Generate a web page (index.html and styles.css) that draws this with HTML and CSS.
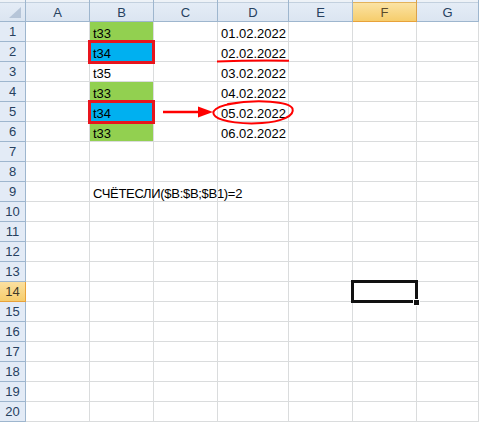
FILE: index.html
```html
<!DOCTYPE html>
<html>
<head>
<meta charset="utf-8">
<link rel="stylesheet" href="styles.css">
</head>
<body>
<div class="sheet">
  <div class="ch corner"><svg class="tri" width="14" height="12" viewBox="0 0 14 12"><polygon points="13,0 13,11 1,11" fill="#b6c5d8"/></svg></div>
  <div class="ch">A</div><div class="ch">B</div><div class="ch">C</div><div class="ch">D</div><div class="ch">E</div><div class="ch sel">F</div><div class="ch">G</div>

  <div class="rh">1</div><div class="c"></div><div class="c green">t33</div><div class="c"></div><div class="c date">01.02.2022</div><div class="c"></div><div class="c"></div><div class="c"></div>
  <div class="rh">2</div><div class="c"></div><div class="c blue boxed">t34<span class="redbox"></span></div><div class="c"></div><div class="c date">02.02.2022</div><div class="c"></div><div class="c"></div><div class="c"></div>
  <div class="rh">3</div><div class="c"></div><div class="c">t35</div><div class="c"></div><div class="c date">03.02.2022</div><div class="c"></div><div class="c"></div><div class="c"></div>
  <div class="rh">4</div><div class="c"></div><div class="c green">t33</div><div class="c"></div><div class="c date">04.02.2022</div><div class="c"></div><div class="c"></div><div class="c"></div>
  <div class="rh">5</div><div class="c"></div><div class="c blue boxed">t34<span class="redbox"></span></div><div class="c"></div><div class="c date">05.02.2022</div><div class="c"></div><div class="c"></div><div class="c"></div>
  <div class="rh">6</div><div class="c"></div><div class="c green">t33</div><div class="c"></div><div class="c date">06.02.2022</div><div class="c"></div><div class="c"></div><div class="c"></div>
  <div class="rh">7</div><div class="c"></div><div class="c"></div><div class="c"></div><div class="c"></div><div class="c"></div><div class="c"></div><div class="c"></div>
  <div class="rh">8</div><div class="c"></div><div class="c"></div><div class="c"></div><div class="c"></div><div class="c"></div><div class="c"></div><div class="c"></div>
  <div class="rh">9</div><div class="c"></div><div class="c formula">СЧЁТЕСЛИ($B:$B;$B1)=2</div><div class="c"></div><div class="c"></div><div class="c"></div><div class="c"></div><div class="c"></div>
  <div class="rh">10</div><div class="c"></div><div class="c"></div><div class="c"></div><div class="c"></div><div class="c"></div><div class="c"></div><div class="c"></div>
  <div class="rh">11</div><div class="c"></div><div class="c"></div><div class="c"></div><div class="c"></div><div class="c"></div><div class="c"></div><div class="c"></div>
  <div class="rh">12</div><div class="c"></div><div class="c"></div><div class="c"></div><div class="c"></div><div class="c"></div><div class="c"></div><div class="c"></div>
  <div class="rh">13</div><div class="c"></div><div class="c"></div><div class="c"></div><div class="c"></div><div class="c"></div><div class="c"></div><div class="c"></div>
  <div class="rh sel">14</div><div class="c"></div><div class="c"></div><div class="c"></div><div class="c"></div><div class="c"></div><div class="c active"><span class="activebox"></span><span class="handle"></span></div><div class="c"></div>
  <div class="rh">15</div><div class="c"></div><div class="c"></div><div class="c"></div><div class="c"></div><div class="c"></div><div class="c"></div><div class="c"></div>
  <div class="rh">16</div><div class="c"></div><div class="c"></div><div class="c"></div><div class="c"></div><div class="c"></div><div class="c"></div><div class="c"></div>
  <div class="rh">17</div><div class="c"></div><div class="c"></div><div class="c"></div><div class="c"></div><div class="c"></div><div class="c"></div><div class="c"></div>
  <div class="rh">18</div><div class="c"></div><div class="c"></div><div class="c"></div><div class="c"></div><div class="c"></div><div class="c"></div><div class="c"></div>
  <div class="rh">19</div><div class="c"></div><div class="c"></div><div class="c"></div><div class="c"></div><div class="c"></div><div class="c"></div><div class="c"></div>
  <div class="rh">20</div><div class="c"></div><div class="c"></div><div class="c"></div><div class="c"></div><div class="c"></div><div class="c"></div><div class="c"></div>

  <svg class="marks" width="479" height="422" viewBox="0 0 479 422">
    <path d="M217 61.6 Q252 60.2 289 60.8" fill="none" stroke="#f00" stroke-width="2"/>
    <line x1="163" y1="112" x2="201" y2="112" stroke="#f00" stroke-width="2.5"/>
    <polygon points="198,106.5 213,112 198,117.5" fill="#f00"/>
    <path d="M228 104 C258 99 289 101.5 292.5 108.5 C295 116 281 122 262 123 C245 124.5 222 122 215.5 116.5 C210 112 214 105.5 240 102.5" fill="none" stroke="#f00" stroke-width="2" stroke-linecap="round"/>
  </svg>
</div>
</body>
</html>
```

FILE: styles.css
```css
html, body {
  margin: 0;
  padding: 0;
  background: #ffffff;
}

body {
  width: 479px;
  height: 422px;
  overflow: hidden;
  font-family: "Liberation Sans", Arial, sans-serif;
}

.sheet {
  position: relative;
  display: grid;
  grid-template-columns: 26px 64px 64px 64px 71px 64px 64px 1fr;
  grid-template-rows: 22px;
  grid-auto-rows: 20px;
  width: 479px;
  height: 422px;
}

.ch {
  box-sizing: border-box;
  display: flex;
  align-items: center;
  justify-content: center;
  padding-top: 3px;
  font-size: 13px;
  color: #27415f;
  border-right: 1px solid #9eb6ce;
  border-bottom: 1px solid #9eb6ce;
  background: linear-gradient(#eef2f7 0 2px, #c3d0de 2px 3px, #e4ecf6 3px, #dbe5f1);
}

.ch.corner {
  position: relative;
}

.tri {
  position: absolute;
  right: 3px;
  bottom: 2px;
}

.ch.sel {
  background: linear-gradient(#eef2f7 0 2px, #e3b25a 2px 3px, #fbe3a4 3px, #f6cd6c);
  border-bottom: 1px solid #e8a23a;
  border-right: 1px solid #dba24a;
  color: #5b4a2a;
}

.rh {
  box-sizing: border-box;
  display: flex;
  align-items: center;
  justify-content: center;
  font-size: 13px;
  color: #27415f;
  background: #e3ebf6;
  border-right: 1px solid #9eb6ce;
  border-bottom: 1px solid #9eb6ce;
}

.rh.sel {
  background: linear-gradient(#fbe0a0, #f6cd6c);
  border-right: 1px solid #e8a23a;
  border-bottom: 1px solid #e8a23a;
  color: #3f3a2a;
}

.c {
  box-sizing: border-box;
  display: flex;
  align-items: flex-end;
  padding: 0 2px 0 3px;
  font-size: 13px;
  line-height: 15px;
  color: #000;
  white-space: nowrap;
  border-right: 1px solid #dadcdd;
  border-bottom: 1px solid #dadcdd;
}

.c.green {
  background: #92d050;
}

.c.blue {
  background: #00b0f0;
}

.c.date {
  justify-content: flex-end;
  padding-right: 2px;
}

.c.formula {
  letter-spacing: -0.3px;
}

.c.boxed,
.c.active {
  position: relative;
}

.redbox {
  position: absolute;
  left: -2px;
  top: -2px;
  right: -2px;
  bottom: -3px;
  border: 3px solid #e8151d;
}

.activebox {
  position: absolute;
  left: -2px;
  top: -2px;
  right: -2px;
  bottom: -2px;
  border: 3px solid #111;
}

.handle {
  position: absolute;
  right: -3px;
  bottom: -4px;
  width: 5px;
  height: 5px;
  background: #111;
  box-shadow: 0 0 0 1px #fff;
}

.marks {
  position: absolute;
  left: 0;
  top: 0;
  pointer-events: none;
}
```
